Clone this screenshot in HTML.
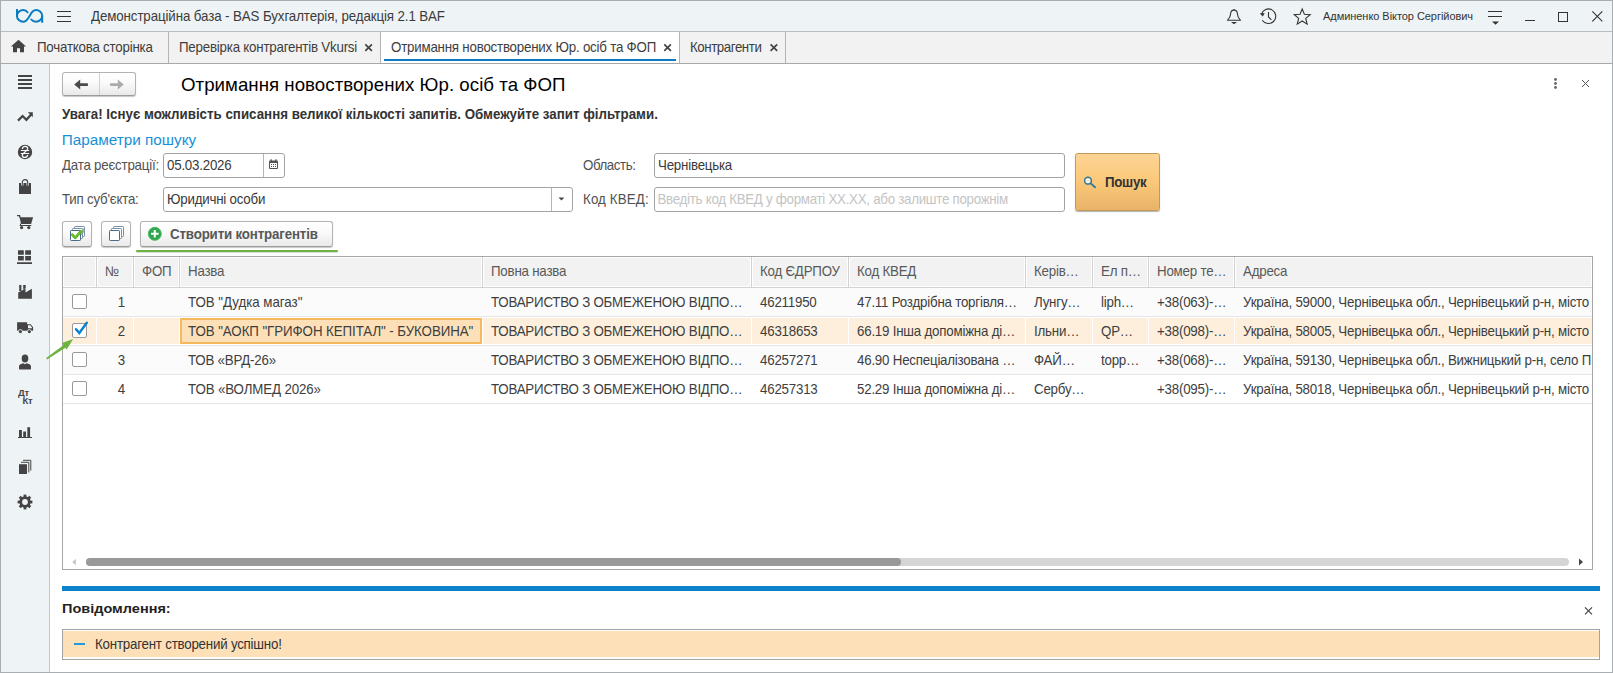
<!DOCTYPE html>
<html><head><meta charset="utf-8">
<style>
*{box-sizing:border-box;margin:0;padding:0}
html,body{width:1613px;height:673px;overflow:hidden;background:#fff}
body{font-family:"Liberation Sans",sans-serif;font-size:13.33px;letter-spacing:-.22px;color:#3e3e3e;position:relative}
.abs{position:absolute}
.t{position:absolute;white-space:nowrap;line-height:16px}
.t,.lbl,.c,.h{transform:scaleY(1.05);transform-origin:0 12.600px}
#frame{position:absolute;left:0;top:0;width:1613px;height:673px;border:1px solid #a9aeb2;pointer-events:none;z-index:50}
#titlebar{position:absolute;left:0;top:0;width:1613px;height:32px;background:#eef3f6;border-bottom:1px solid #b9bdc0}
#tabbar{position:absolute;left:0;top:32px;width:1613px;height:32px;background:#f2f2f2;border-bottom:1px solid #a8a8a8}
#side{position:absolute;left:0;top:64px;width:50px;height:609px;background:#eef3f6;border-right:1px solid #c3c7ca}
.tabsep{position:absolute;top:32px;width:1px;height:31px;background:#b4b4b4}

.btn{position:absolute;border:1px solid #b3b3b3;border-bottom-color:#9c9c9c;border-radius:3px;background:linear-gradient(#ffffff 0%,#fafafa 45%,#e9e9e9 100%);box-shadow:0 1px 1px rgba(0,0,0,.22)}
.inp{position:absolute;height:25px;border:1px solid #a3a3a3;border-radius:3px;background:#fff}
.lbl{position:absolute;white-space:nowrap;line-height:16px;color:#525252}

#tbl{position:absolute;left:62px;top:256px;width:1531px;height:314px;border:1px solid #a6a6a6;background:#fff}
.hc{position:absolute;top:257px;height:30px;background:#f2f2f2;border:1px solid #fff}
.row{position:absolute;left:63px;width:1529px;height:29px;border-bottom:1px solid #e6e6e6}
.cs{position:absolute;top:257px;width:2px;height:30px;background:#fff;border-left:1px solid #d5d5d5}
.c{position:absolute;white-space:nowrap;line-height:16px;color:#3e3e3e}
.h{position:absolute;white-space:nowrap;line-height:16px;color:#595959;top:264px}
.cb{position:absolute;left:72px;width:15px;height:15px;border:1px solid #999;border-radius:2px;background:#fff}
</style></head><body>
<div id="titlebar"></div>

<!-- TITLE BAR -->
<svg class="abs" style="left:0;top:0" width="1613" height="32" viewBox="0 0 1613 32" fill="none">
 <g stroke="#0b7cc1" stroke-width="2" fill="none" stroke-linecap="butt">
  <path d="M17 9V15.900A6.300 5.800 0 0 0 23.300 21.700C29.400 21.700 29.800 10.100 35.900 10.100A6.300 5.800 0 0 1 42.200 15.900V22.800"/>
  <path d="M17 15.900A6.300 5.800 0 0 1 23.300 10.100C25.200 10.100 26.600 10.900 27.500 12.300" stroke-linecap="round"/>
  <path d="M42.200 15.900A6.300 5.800 0 0 1 35.900 21.700C34 21.700 32.400 20.900 31.300 19.500" stroke-linecap="round"/>
 </g>
 <g stroke="#333" stroke-width="1">
  <path d="M57 11.5h14M57 16.5h14M57 21.5h14"/>
  <path d="M1488 11.5h14M1488 16.5h14"/>
  <path d="M1525 20.5h10"/>
  <rect x="1558.5" y="12.5" width="9" height="9"/>
  <path d="M1592.3 11.3l10 10M1602.3 11.3l-10 10" stroke-width="1.1"/>
 </g>
 <path d="M1492 21.5h7l-3.5 3.2z" fill="#333"/>
 <!-- bell -->
 <g stroke="#333" stroke-width="1.1" fill="none" stroke-linejoin="round">
  <path d="M1227.5 20.3h13c-2.6-2.4-3-4.4-3.1-6.5-.1-2.2-1.4-3.7-3.4-3.7s-3.3 1.5-3.4 3.7c-.1 2.1-.5 4.1-3.1 6.500z"/>
  <path d="M1234 10.1v-1.2"/>
 </g>
 <path d="M1231 22h6l-3 2.300z" fill="#333"/>
 <!-- history -->
 <g stroke="#333" stroke-width="1.1" fill="none">
  <path d="M1262.300 20.200a7.300 7.300 0 1 0-.9-5.900"/>
  <path d="M1268.500 12v5l2.900 2.800"/>
 </g>
 <path d="M1259.800 13.600l4.800-.7-1.700 3.600z" fill="#333"/>
 <!-- star -->
 <path d="M1302.20 8.90L1304.37 14.31L1310.19 14.70L1305.72 18.44L1307.14 24.10L1302.20 21.00L1297.26 24.10L1298.68 18.44L1294.21 14.70L1300.03 14.31z" stroke="#333" stroke-width="1.100" fill="none" stroke-linejoin="miter"/>
</svg>
<div class="t" style="left:91px;top:9px;color:#3c3c3c;letter-spacing:-.11px">Демонстраційна база - BAS Бухгалтерія, редакція 2.1 BAF</div>
<div class="t" style="left:1323px;top:9px;font-size:11px;line-height:14px;color:#333;letter-spacing:-.05px;transform:none">Админенко Віктор Сергійович</div>
<div id="tabbar"></div>

<!-- TABS -->
<div class="abs" style="left:381px;top:32px;width:298px;height:31px;background:#fff"></div>
<div class="abs" style="left:384px;top:59px;width:292px;height:2px;background:#0b7cc1"></div>
<div class="tabsep" style="left:168px"></div>
<div class="tabsep" style="left:380px"></div>
<div class="tabsep" style="left:679px"></div>
<div class="tabsep" style="left:785px"></div>
<svg class="abs" style="left:0;top:32px" width="800" height="31" viewBox="0 32 800 31">
 <path d="M18.500 39.800l7.600 6.800h-2.100v5.600h-4v-4h-3v4h-4v-5.600h-2.100z" fill="#444"/>
 <g stroke="#444" stroke-width="1.700" fill="none">
  <path d="M365.300 44.300l6.600 6.600M371.900 44.300l-6.600 6.600"/>
  <path d="M664.300 44.300l6.600 6.600M670.900 44.300l-6.600 6.600"/>
  <path d="M770.600 44.300l6.600 6.600M777.200 44.300l-6.600 6.600"/>
 </g>
</svg>
<div class="t" style="left:37px;top:40px">Початкова сторінка</div>
<div class="t" style="left:179px;top:40px">Перевірка контрагентів Vkursi</div>
<div class="t" style="left:391px;top:40px">Отримання новостворених Юр. осіб та ФОП</div>
<div class="t" style="left:690px;top:40px;letter-spacing:-.45px">Контрагенти</div>
<div id="side"></div>

<!-- SIDEBAR ICONS -->
<svg class="abs" style="left:0;top:64px" width="49" height="480" viewBox="0 64 49 480" fill="#444">
 <path d="M18 76h14M18 80h14M18 84h14M18 88h14" stroke="#444" stroke-width="1.800" fill="none"/>
 <path d="M18 120.600l4.600-4.600 3.800 3.800 5-5.500" stroke="#444" stroke-width="2.200" fill="none"/>
 <path d="M27.800 112.200h5v5z"/>
 <circle cx="25" cy="152" r="7.200"/>
 <g stroke="#f4f8fa" fill="none">
  <path d="M22.300 149c.3-1.700 1.400-2.600 2.800-2.600 1.500 0 2.600.9 2.600 2.200 0 2.600-5.400 4-5.400 6.600 0 1.300 1.100 2.200 2.600 2.200 1.400 0 2.500-.9 2.800-2.600" stroke-width="1.300"/>
  <path d="M20.800 150.500h8.400M20.800 153.500h8.400" stroke-width="1"/>
 </g>
 <path d="M19 183h12v11h-12z"/>
 <path d="M22.300 185.500v-3a2.700 2.900 0 0 1 5.400 0v3" stroke="#eef3f6" stroke-width="2.400" fill="none"/>
 <path d="M22.300 185.500v-3a2.700 2.900 0 0 1 5.400 0v3" stroke="#444" stroke-width="1.100" fill="none"/>
 <path d="M17 215.700h2.600l.6 2" stroke="#444" stroke-width="1.300" fill="none"/>
 <path d="M19.500 217.300h13.600l-2 6.700h-10z"/>
 <path d="M20.700 223.500l-.4 2h11" stroke="#444" stroke-width="1.100" fill="none"/>
 <circle cx="21.600" cy="227.600" r="1.600"/><circle cx="28.800" cy="227.600" r="1.600"/>
 <path d="M18 250.300h5.800v4.500h-5.800zM25.200 250.300h5.800v4.500h-5.800zM18 256h5.800v4.600h-5.800zM25.200 256h5.800v4.600h-5.800zM17 262.200h15v1.800h-15z"/>
 <path d="M18.200 298.700v-6.200l7.300-4v4l6.400-3.700v9.900z"/>
 <path d="M19.200 285h2.200v6h-2.200zM23.200 285h2.500v3.200l-2.500 1.400z"/>
 <path d="M17.100 322.200h10v2h3.600l2.400 3v3.600h-16z"/>
 <path d="M28 325.200h2.300l1.700 2.200v.9h-4z" fill="#eef3f6"/>
 <circle cx="20.400" cy="331.600" r="2.300" fill="#eef3f6"/><circle cx="29.400" cy="331.600" r="2.300" fill="#eef3f6"/>
 <circle cx="20.400" cy="331.600" r="1.600"/><circle cx="29.400" cy="331.600" r="1.600"/>
 <ellipse cx="25" cy="358.600" rx="3.300" ry="4"/>
 <path d="M19 368.800v-2.300c0-2.200 2.500-2.600 4.200-3.300l1.800 1 1.800-1c1.700.7 4.200 1.100 4.200 3.300v2.300c0 .4-.3.700-.7.700h-10.600c-.4 0-.7-.3-.7-.7z"/>
 <path d="M19 430h2.900v7h-2.900zM23.200 431.500h2.800v5.500h-2.800zM27.300 427.300h2.800v9.700h-2.800zM18 437h14v1.100h-14z"/>
 <path d="M19 464.200h8v9.800h-8z"/>
 <path d="M21 462.300h7.800v10.200M23 460.300h7.800v10.200" stroke="#444" stroke-width="1" fill="none"/>
 <circle cx="25" cy="502" r="4.300" stroke="#444" stroke-width="2.800" fill="none"/>
 <rect x="23.6" y="494.6" width="2.800" height="3" transform="rotate(0 25 502)"/><rect x="23.6" y="494.6" width="2.800" height="3" transform="rotate(45 25 502)"/><rect x="23.6" y="494.6" width="2.800" height="3" transform="rotate(90 25 502)"/><rect x="23.6" y="494.6" width="2.800" height="3" transform="rotate(135 25 502)"/><rect x="23.6" y="494.6" width="2.800" height="3" transform="rotate(180 25 502)"/><rect x="23.6" y="494.6" width="2.800" height="3" transform="rotate(225 25 502)"/><rect x="23.6" y="494.6" width="2.800" height="3" transform="rotate(270 25 502)"/><rect x="23.6" y="494.6" width="2.800" height="3" transform="rotate(315 25 502)"/>
</svg>
<div class="t" style="left:18px;top:387px;font-size:9.500px;font-weight:bold;line-height:11px;color:#444;letter-spacing:-.3px">Дт</div>
<div class="t" style="left:22.500px;top:394.500px;font-size:9.500px;font-weight:bold;line-height:11px;color:#444;letter-spacing:-.3px">Кт</div>

<!-- HEADER -->
<div class="btn" style="left:62px;top:72px;width:74px;height:24px"></div>
<div class="abs" style="left:99px;top:73px;width:1px;height:22px;background:#d0d0d0"></div>
<svg class="abs" style="left:62px;top:72px" width="74" height="24" viewBox="62 72 74 24">
 <path d="M74.200 84.600l6-5v3.700h7.700v2.600h-7.700v3.700z" fill="#4a4a4a"/>
 <path d="M123.800 84.600l-6-5v3.700h-7.700v2.600h7.700v3.700z" fill="#ababab"/>
</svg>
<div class="t" style="left:181px;top:73px;font-size:18.670px;line-height:24px;color:#000;letter-spacing:.04px;transform:none">Отримання новостворених Юр. осіб та ФОП</div>
<svg class="abs" style="left:1545px;top:72px" width="50" height="24" viewBox="1545 72 50 24">
 <circle cx="1555.500" cy="79.500" r="1.450" fill="#6a6a6a"/><circle cx="1555.500" cy="83.500" r="1.450" fill="#6a6a6a"/><circle cx="1555.500" cy="87.500" r="1.450" fill="#6a6a6a"/>
 <path d="M1582 80l7 7M1589 80l-7 7" stroke="#555" stroke-width="1" fill="none"/>
</svg>
<div class="t" style="left:62px;top:106.800px;font-size:13.330px;font-weight:bold;color:#333;letter-spacing:0">Увага! Існує можливість списання великої кількості запитів. Обмежуйте запит фільтрами.</div>
<div class="t" style="left:61.700px;top:130.900px;font-size:15.300px;line-height:18px;color:#1790d8;letter-spacing:0;transform:none">Параметри пошуку</div>

<!-- FORM -->
<div class="lbl" style="left:62px;top:157.600px">Дата реєстрації:</div>
<div class="inp" style="left:163px;top:153px;width:122px"></div>
<div class="abs" style="left:263px;top:154px;width:1px;height:23px;background:#b5b5b5"></div>
<div class="t" style="left:167px;top:157.600px;color:#3a3a3a">05.03.2026</div>
<svg class="abs" style="left:268px;top:158px" width="11" height="12" viewBox="268 158 11 12">
 <rect x="269" y="160.500" width="9" height="8.500" rx="1" fill="#555"/>
 <rect x="270" y="163" width="7" height="5" fill="#fff"/>
 <rect x="270.500" y="159.300" width="1.300" height="2.200" fill="#555"/><rect x="275.200" y="159.300" width="1.300" height="2.200" fill="#555"/>
 <g fill="#555"><rect x="271" y="164" width="1" height="1"/><rect x="273" y="164" width="1" height="1"/><rect x="275" y="164" width="1" height="1"/><rect x="271" y="166" width="1" height="1"/><rect x="273" y="166" width="1" height="1"/><rect x="275" y="166" width="1" height="1"/></g>
</svg>
<div class="lbl" style="left:62px;top:191.600px">Тип суб'єкта:</div>
<div class="inp" style="left:163px;top:187px;width:410px"></div>
<div class="abs" style="left:551px;top:188px;width:1px;height:23px;background:#b5b5b5"></div>
<div class="t" style="left:167px;top:191.600px;color:#3a3a3a">Юридичні особи</div>
<svg class="abs" style="left:557px;top:196px" width="9" height="6" viewBox="557 196 9 6"><path d="M558.500 197.400h5.800l-2.900 3z" fill="#444"/></svg>
<div class="lbl" style="left:583px;top:157.600px;letter-spacing:-.45px">Область:</div>
<div class="inp" style="left:654px;top:153px;width:411px"></div>
<div class="t" style="left:658px;top:157.600px;color:#3a3a3a">Чернівецька</div>
<div class="lbl" style="left:583px;top:191.600px;letter-spacing:.12px">Код КВЕД:</div>
<div class="inp" style="left:654px;top:187px;width:411px"></div>
<div class="t" style="left:657.500px;top:191.600px;color:#c4c4c4;letter-spacing:-.28px">Введіть код КВЕД у форматі ХХ.ХХ, або залиште порожнім</div>
<div class="abs" style="left:1075px;top:153px;width:85px;height:58px;border:1px solid #c39a55;border-radius:2.500px;background:linear-gradient(#fdd495 0%,#fbc878 50%,#e8b369 100%);box-shadow:0 1px 1px rgba(0,0,0,.3)"></div>
<svg class="abs" style="left:1082px;top:175px" width="16" height="16" viewBox="1082 175 16 16">
 <circle cx="1088" cy="180.700" r="3.400" fill="#fdecd2" stroke="#2a7aa0" stroke-width="1.500"/>
 <path d="M1090.700 183.400l4.400 3.800" stroke="#2a7aa0" stroke-width="1.900" stroke-linecap="round"/>
</svg>
<div class="t" style="left:1105px;top:175px;font-weight:bold;letter-spacing:-.3px;color:#333">Пошук</div>

<!-- TOOLBAR -->
<div class="btn" style="left:62px;top:221px;width:30px;height:26px"></div>
<div class="btn" style="left:101px;top:221px;width:30px;height:26px"></div>
<div class="btn" style="left:140px;top:221px;width:193px;height:26px"></div>
<svg class="abs" style="left:62px;top:221px" width="110" height="25" viewBox="62 221 110 25">
 <g fill="#fff" stroke="#7890a8" stroke-width="1">
  <rect x="74.500" y="226.500" width="10" height="10" rx=".7"/>
  <rect x="72.500" y="228.500" width="10" height="10" rx=".7"/>
  <rect x="113.500" y="226.500" width="10" height="10" rx=".7"/>
  <rect x="111.500" y="228.500" width="10" height="10" rx=".7"/>
 </g>
 <path d="M83.300 228.300v4.500M81.300 230.300v4.500" stroke="#8fd05a" stroke-width="1.400" fill="none"/>
 <g fill="#fff" stroke="#4a6a8a" stroke-width="1">
  <rect x="70.500" y="230.500" width="10" height="10" rx=".7"/>
  <rect x="109.500" y="230.500" width="10" height="10" rx=".7"/>
 </g>
 <path d="M72.200 234.700l3 3.100 5.600-6.400" stroke="#4ea80e" stroke-width="2.600" fill="none" stroke-linecap="round" stroke-linejoin="round"/>
 <path d="M72.200 234.700l3 3.100 5.600-6.400" stroke="#6cc62a" stroke-width="1.400" fill="none" stroke-linecap="round" stroke-linejoin="round"/>
 <circle cx="154.800" cy="233.800" r="6.500" fill="#2fa74d" stroke="#4cba5f" stroke-width="1"/>
 <path d="M154.800 230v7.600M151 233.800h7.600" stroke="#fff" stroke-width="2"/>
</svg>
<div class="t" style="left:170px;top:227px;font-weight:bold;letter-spacing:-.17px;color:#585858">Створити контрагентів</div>
<div class="abs" style="left:136px;top:249.500px;width:201.500px;height:2.600px;border-radius:1.500px;background:#6cb33f;box-shadow:0 1px 1px rgba(0,0,0,.15)"></div>
<!-- TABLE -->
<div id="tbl"></div>
<div class="hc" style="left:63px;width:33px"></div>
<div class="hc" style="left:97px;width:36px"></div>
<div class="hc" style="left:134px;width:45px"></div>
<div class="hc" style="left:180px;width:302px"></div>
<div class="hc" style="left:483px;width:268px"></div>
<div class="hc" style="left:752px;width:96px"></div>
<div class="hc" style="left:849px;width:176px"></div>
<div class="hc" style="left:1026px;width:66px"></div>
<div class="hc" style="left:1093px;width:55px"></div>
<div class="hc" style="left:1149px;width:85px"></div>
<div class="hc" style="left:1235px;width:357px"></div>
<div class="abs" style="left:63px;top:287px;width:1529px;height:1px;background:#d2d2d2"></div>
<div class="abs" style="left:96px;top:257px;width:1px;height:30px;background:#d2d2d2"></div>
<div class="abs" style="left:133px;top:257px;width:1px;height:30px;background:#d2d2d2"></div>
<div class="abs" style="left:179px;top:257px;width:1px;height:30px;background:#d2d2d2"></div>
<div class="abs" style="left:482px;top:257px;width:1px;height:30px;background:#d2d2d2"></div>
<div class="abs" style="left:751px;top:257px;width:1px;height:30px;background:#d2d2d2"></div>
<div class="abs" style="left:848px;top:257px;width:1px;height:30px;background:#d2d2d2"></div>
<div class="abs" style="left:1025px;top:257px;width:1px;height:30px;background:#d2d2d2"></div>
<div class="abs" style="left:1092px;top:257px;width:1px;height:30px;background:#d2d2d2"></div>
<div class="abs" style="left:1148px;top:257px;width:1px;height:30px;background:#d2d2d2"></div>
<div class="abs" style="left:1234px;top:257px;width:1px;height:30px;background:#d2d2d2"></div>
<div class="row" style="top:288px;background:#fbfbfb"></div>
<div class="row" style="top:317px;background:#ffffff"></div>
<div class="row" style="top:346px;background:#fbfbfb"></div>
<div class="row" style="top:375px;background:#ffffff"></div>
<div class="abs" style="left:63px;top:318px;width:33px;height:26px;background:#fdefdc"></div>
<div class="abs" style="left:97px;top:318px;width:36px;height:26px;background:#fdefdc"></div>
<div class="abs" style="left:134px;top:318px;width:45px;height:26px;background:#fdefdc"></div>
<div class="abs" style="left:180px;top:318px;width:302px;height:26px;background:#fdefdc"></div>
<div class="abs" style="left:483px;top:318px;width:268px;height:26px;background:#fdefdc"></div>
<div class="abs" style="left:752px;top:318px;width:96px;height:26px;background:#fdefdc"></div>
<div class="abs" style="left:849px;top:318px;width:176px;height:26px;background:#fdefdc"></div>
<div class="abs" style="left:1026px;top:318px;width:66px;height:26px;background:#fdefdc"></div>
<div class="abs" style="left:1093px;top:318px;width:55px;height:26px;background:#fdefdc"></div>
<div class="abs" style="left:1149px;top:318px;width:85px;height:26px;background:#fdefdc"></div>
<div class="abs" style="left:1235px;top:318px;width:357px;height:26px;background:#fdefdc"></div>
<div class="abs" style="left:180px;top:318px;width:302px;height:26px;background:#fde0b8;border:2px solid #f6b85c"></div>
<div class="h" style="left:105px">№</div>
<div class="h" style="left:142px">ФОП</div>
<div class="h" style="left:188px">Назва</div>
<div class="h" style="left:491px">Повна назва</div>
<div class="h" style="left:760px">Код ЄДРПОУ</div>
<div class="h" style="left:857px">Код КВЕД</div>
<div class="h" style="left:1034px">Керів…</div>
<div class="h" style="left:1101px">Ел п…</div>
<div class="h" style="left:1157px">Номер те…</div>
<div class="h" style="left:1243px">Адреса</div>
<div class="cb" style="top:294px"></div>
<div class="c" style="left:97px;width:28px;text-align:right;top:295px">1</div>
<div class="c" style="left:188px;top:295px;letter-spacing:-.04px">ТОВ "Дудка магаз"</div>
<div class="c" style="left:491px;top:295px">ТОВАРИСТВО З ОБМЕЖЕНОЮ ВІДПО…</div>
<div class="c" style="left:760px;top:295px">46211950</div>
<div class="c" style="left:857px;top:295px">47.11 Роздрібна торгівля…</div>
<div class="c" style="left:1034px;top:295px">Лунгу…</div>
<div class="c" style="left:1101px;top:295px">liph…</div>
<div class="c" style="left:1157px;top:295px">+38(063)-…</div>
<div class="c" style="left:1243px;top:295px;width:348px;overflow:hidden">Україна, 59000, Чернівецька обл., Чернівецький р-н, місто</div>
<div class="cb" style="top:323px"></div>
<div class="c" style="left:97px;width:28px;text-align:right;top:324px">2</div>
<div class="c" style="left:188px;top:324px;letter-spacing:-.08px">ТОВ "АОКП "ГРИФОН КЕПІТАЛ" - БУКОВИНА"</div>
<div class="c" style="left:491px;top:324px">ТОВАРИСТВО З ОБМЕЖЕНОЮ ВІДПО…</div>
<div class="c" style="left:760px;top:324px">46318653</div>
<div class="c" style="left:857px;top:324px">66.19 Інша допоміжна ді…</div>
<div class="c" style="left:1034px;top:324px">Ільни…</div>
<div class="c" style="left:1101px;top:324px">QP…</div>
<div class="c" style="left:1157px;top:324px">+38(098)-…</div>
<div class="c" style="left:1243px;top:324px;width:348px;overflow:hidden">Україна, 58005, Чернівецька обл., Чернівецький р-н, місто</div>
<div class="cb" style="top:352px"></div>
<div class="c" style="left:97px;width:28px;text-align:right;top:353px">3</div>
<div class="c" style="left:188px;top:353px">ТОВ «ВРД-26»</div>
<div class="c" style="left:491px;top:353px">ТОВАРИСТВО З ОБМЕЖЕНОЮ ВІДПО…</div>
<div class="c" style="left:760px;top:353px">46257271</div>
<div class="c" style="left:857px;top:353px">46.90 Неспеціалізована …</div>
<div class="c" style="left:1034px;top:353px">ФАЙ…</div>
<div class="c" style="left:1101px;top:353px">topp…</div>
<div class="c" style="left:1157px;top:353px">+38(068)-…</div>
<div class="c" style="left:1243px;top:353px;width:348px;overflow:hidden">Україна, 59130, Чернівецька обл., Вижницький р-н, село П</div>
<div class="cb" style="top:381px"></div>
<div class="c" style="left:97px;width:28px;text-align:right;top:382px">4</div>
<div class="c" style="left:188px;top:382px;letter-spacing:-.13px">ТОВ «ВОЛМЕД 2026»</div>
<div class="c" style="left:491px;top:382px">ТОВАРИСТВО З ОБМЕЖЕНОЮ ВІДПО…</div>
<div class="c" style="left:760px;top:382px">46257313</div>
<div class="c" style="left:857px;top:382px">52.29 Інша допоміжна ді…</div>
<div class="c" style="left:1034px;top:382px">Сербу…</div>
<div class="c" style="left:1157px;top:382px">+38(095)-…</div>
<div class="c" style="left:1243px;top:382px;width:348px;overflow:hidden">Україна, 58018, Чернівецька обл., Чернівецький р-н, місто</div>
<svg class="abs" style="left:40px;top:318px" width="52" height="46" viewBox="40 318 52 46">
 <path d="M76 329.200l3.300 3.800 7.500-10.200" stroke="#0b82d0" stroke-width="2.500" fill="none" stroke-linecap="round"/>
 <path d="M46.200 358l.9 1.600 18.600-12.200-1.700-2.700z" fill="#6cb33f"/>
 <path d="M73.200 339l-11.200 4.100 4.600 6.300z" fill="#6cb33f"/>
</svg>
<!-- SCROLLBAR -->
<div class="abs" style="left:86px;top:558px;width:1483px;height:8px;border-radius:4px;background:#d5d5d5"></div>
<div class="abs" style="left:86px;top:558px;width:815px;height:8px;border-radius:4px;background:#999"></div>
<svg class="abs" style="left:70px;top:557px" width="1520" height="10" viewBox="70 557 1520 10">
 <path d="M72.300 562l3.600-3.200v6.400z" fill="#c4c4c4"/>
 <path d="M1583 562l-4-3.400v6.800z" fill="#444"/>
</svg>
<!-- MESSAGES -->
<div class="abs" style="left:62px;top:586px;width:1538px;height:5px;background:#0b82c9"></div>
<div class="t" style="left:62px;top:601px;font-weight:bold;font-size:13px;letter-spacing:0;color:#222;transform:scaleX(1.115);transform-origin:0 0">Повідомлення:</div>
<svg class="abs" style="left:1583px;top:605px" width="12" height="12" viewBox="1583 605 12 12"><path d="M1585 607.300l7 7M1592 607.300l-7 7" stroke="#444" stroke-width="1.200" fill="none"/></svg>
<div class="abs" style="left:62px;top:629px;width:1538px;height:31px;border:1px solid #a3a3a3;background:#fff"></div>
<div class="abs" style="left:63px;top:631px;width:1536px;height:26px;background:#fde0b8"></div>
<div class="abs" style="left:74px;top:643px;width:11px;height:2px;background:#1d9de0"></div>
<div class="t" style="left:95px;top:637px;color:#333">Контрагент створений успішно!</div>
<div id="frame"></div>
</body></html>
